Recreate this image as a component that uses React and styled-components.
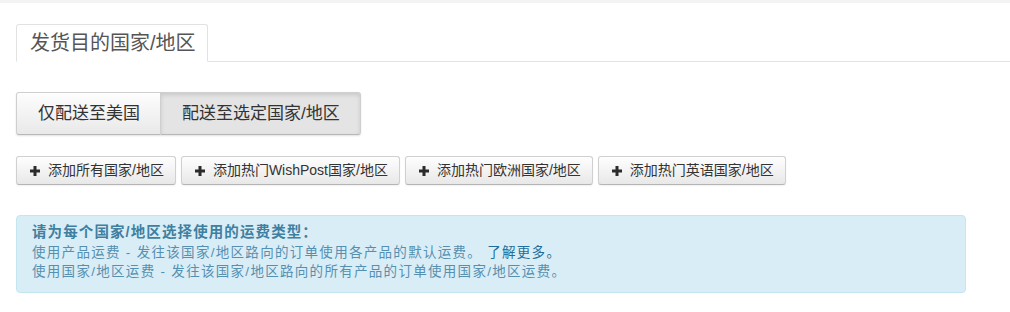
import React from 'react';
import styled, {createGlobalStyle} from 'styled-components';

const GlobalStyle = createGlobalStyle`
    body {
        margin: 0;
        background: #fff;
        font-family: "Liberation Sans", "Noto Sans CJK SC", sans-serif;
    }
`

const tabs = ['发货目的国家/地区'];
const modes = [
    {label: '仅配送至美国', active: false},
    {label: '配送至选定国家/地区', active: true},
];
const quickAdds = [
    '添加所有国家/地区',
    '添加热门WishPost国家/地区',
    '添加热门欧洲国家/地区',
    '添加热门英语国家/地区',
];

const PlusIcon = () => (
    <svg width="10" height="10" viewBox="0 0 10 10">
        <rect x="3.5" y="0" width="3" height="10" fill="#2b2b2b" />
        <rect x="0" y="3.5" width="10" height="3" fill="#2b2b2b" />
    </svg>
)

const App = () => {
    return (
        <>
            <GlobalStyle />
            <TopStrip />
            <Page>
                <TabNav>
                    {tabs.map((t) => (
                        <Tab key={t}>{t}</Tab>
                    ))}
                </TabNav>

                <Body>
                    <ButtonGroup>
                        {modes.map((m) => (
                            <GroupButton key={m.label} $active={m.active}>{m.label}</GroupButton>
                        ))}
                    </ButtonGroup>

                    <QuickRow>
                        {quickAdds.map((q) => (
                            <SmallButton key={q}>
                                <PlusIcon />
                                <span>{q}</span>
                            </SmallButton>
                        ))}
                    </QuickRow>

                    <Alert>
                        <AlertTitle>请为每个国家/地区选择使用的运费类型：</AlertTitle>
                        <div>
                            使用产品运费 - 发往该国家/地区路向的订单使用各产品的默认运费。 <AlertLink href="#">了解更多。</AlertLink>
                        </div>
                        <div>使用国家/地区运费 - 发往该国家/地区路向的所有产品的订单使用国家/地区运费。</div>
                    </Alert>
                </Body>
            </Page>
        </>
    )
}

const TopStrip = styled.div`
    height: 3px;
    background: #f3f3f3;
`

const Page = styled.div`
    padding: 21px 0 0 16px;
`

const TabNav = styled.div`
    display: flex;
    border-bottom: 1px solid #e2e2e2;
`

const Tab = styled.div`
    margin-bottom: -1px;
    padding: 6px 11px 6px 13px;
    font-size: 20px;
    line-height: 24px;
    color: #555;
    background: #fff;
    border: 1px solid #e2e2e2;
    border-bottom-color: #fff;
    border-radius: 3px 3px 0 0;
`

const Body = styled.div`
    display: flex;
    flex-direction: column;
    align-items: flex-start;
    padding-top: 30px;
`

const ButtonGroup = styled.div`
    display: flex;
    border-radius: 3px;
    box-shadow: 0 1px 2px rgba(0, 0, 0, 0.12);
`

const GroupButton = styled.button`
    font-family: inherit;
    font-size: 17px;
    line-height: 21px;
    padding: 10px 20px 10px 21px;
    color: #333;
    cursor: pointer;
    border: 1px solid #cfcfcf;
    border-bottom-color: #b8b8b8;
    background: ${p => p.$active ? '#e4e4e4' : 'linear-gradient(#fdfdfd, #e9e9e9)'};
    box-shadow: ${p => p.$active ? 'inset 0 2px 4px rgba(0,0,0,0.12)' : 'inset 0 1px 0 rgba(255,255,255,0.4)'};

    &:first-child {
        border-radius: 3px 0 0 3px;
    }
    &:last-child {
        border-left: none;
        border-radius: 0 3px 3px 0;
    }
`

const QuickRow = styled.div`
    display: flex;
    gap: 5px;
    margin-top: 21px;
`

const SmallButton = styled.button`
    display: flex;
    align-items: center;
    gap: 8px;
    font-family: inherit;
    font-size: 14px;
    line-height: 19px;
    padding: 4px 11px 4px 13px;
    color: #333;
    cursor: pointer;
    background: linear-gradient(#fefefe, #e8e8e8);
    border: 1px solid #d0d0d0;
    border-bottom-color: #b5b5b5;
    border-radius: 3px;
    box-shadow: 0 1px 2px rgba(0, 0, 0, 0.06);
`

const Alert = styled.div`
    box-sizing: border-box;
    width: 950px;
    margin-top: 30px;
    padding: 7px 15px 10px 15px;
    font-size: 13.5px;
    line-height: 19.6px;
    letter-spacing: 1.3px;
    color: #5590b0;
    background: #d9edf7;
    border: 1px solid #c4e6ef;
    border-radius: 4px;
`

const AlertTitle = styled.div`
    font-size: 14.5px;
    font-weight: bold;
    color: #3f7f9f;
    letter-spacing: 1.1px;
`

const AlertLink = styled.a`
    color: #1f6e98;
    text-decoration: none;
`

export default App
